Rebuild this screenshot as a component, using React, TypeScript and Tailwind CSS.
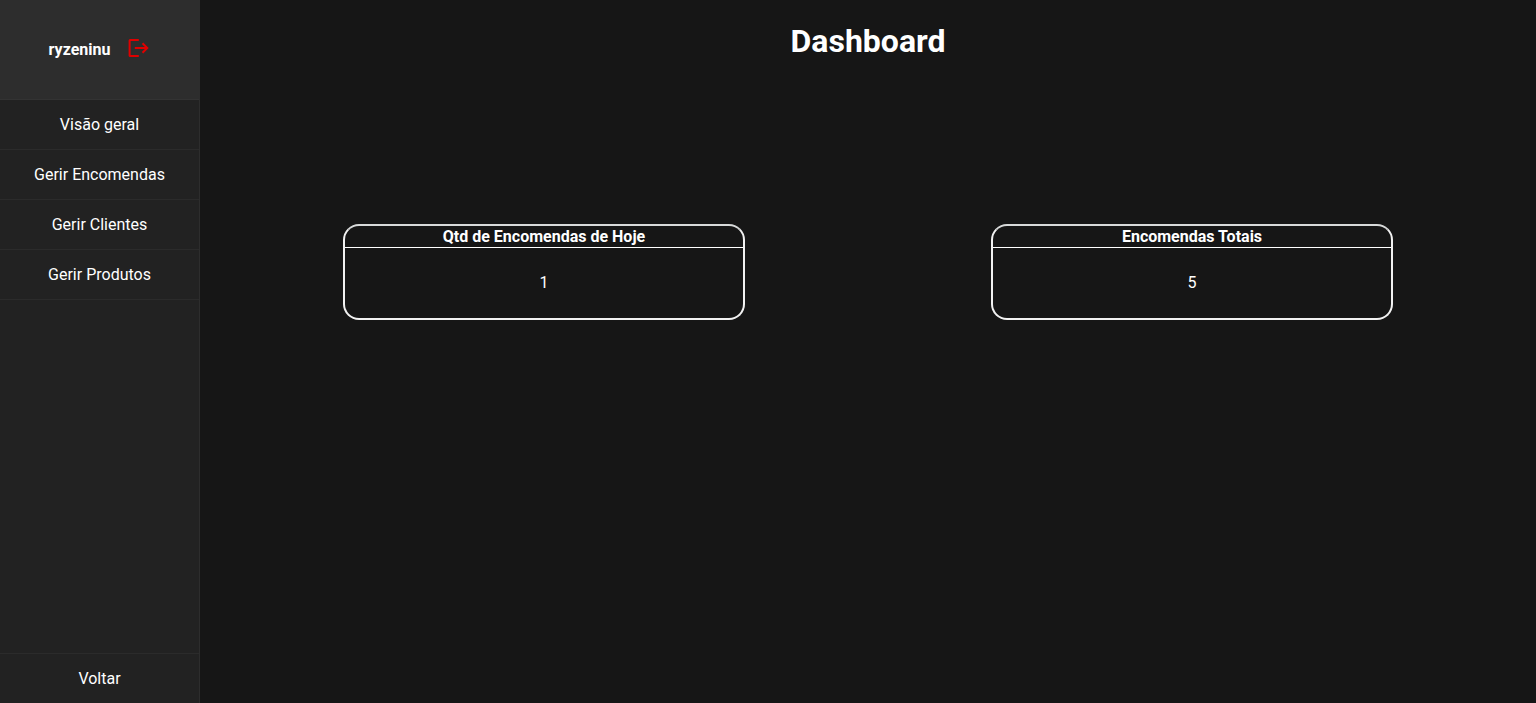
const links = ["Visão geral", "Gerir Encomendas", "Gerir Clientes", "Gerir Produtos"];

const stats = [
  { title: "Qtd de Encomendas de Hoje", value: 1 },
  { title: "Encomendas Totais", value: 5 },
];

function LogoutIcon() {
  return (
    <svg width="24" height="24" viewBox="0 0 24 24" fill="none" stroke="currentColor" strokeWidth="2" aria-hidden="true">
      <path d="M12.8 4H4.2a.6.6 0 0 0-.6.6v14.8a.6.6 0 0 0 .6.6h8.6" />
      <path d="M8.8 12h12.5M16.5 7.2l4.8 4.8-4.8 4.8" />
    </svg>
  );
}

function StatCard({ title, value }: { title: string; value: number }) {
  return (
    <section className="w-full max-w-[402px] rounded-2xl border-2 border-[#f2f2f2] border-t-[#d8dada] text-center">
      <h2 className="border-b border-white pt-px text-base leading-5 font-bold">{title}</h2>
      <p className="py-[25px] text-base leading-5">{value}</p>
    </section>
  );
}

export default function App() {
  return (
    <div className="flex min-h-screen bg-[#161616] font-['Roboto',sans-serif] text-white">
      <aside className="flex w-50 shrink-0 flex-col border-r border-[#2d2d2d] bg-[#222222]">
        <div className="flex h-25 items-center justify-center gap-4 border-b border-[#333333] bg-[#2d2d2d]">
          <span className="text-base font-bold">ryzeninu</span>
          <button type="button" aria-label="Sair" className="cursor-pointer pb-1 text-[#e00000]">
            <LogoutIcon />
          </button>
        </div>
        <nav className="flex grow flex-col">
          {links.map((label) => (
            <a key={label} href="#" className="flex h-[50px] items-center justify-center border-b border-[#2b2b2b]">
              {label}
            </a>
          ))}
          <a href="#" className="mt-auto flex h-[50px] items-center justify-center border-t border-[#2b2b2b]">
            Voltar
          </a>
        </nav>
      </aside>
      <main className="grow px-5 pt-5">
        <h1 className="text-center text-[32px] leading-[42px] font-bold">Dashboard</h1>
        <div className="mt-[162px] grid grid-cols-2 justify-items-center">
          {stats.map((stat) => (
            <StatCard key={stat.title} {...stat} />
          ))}
        </div>
      </main>
    </div>
  );
}
